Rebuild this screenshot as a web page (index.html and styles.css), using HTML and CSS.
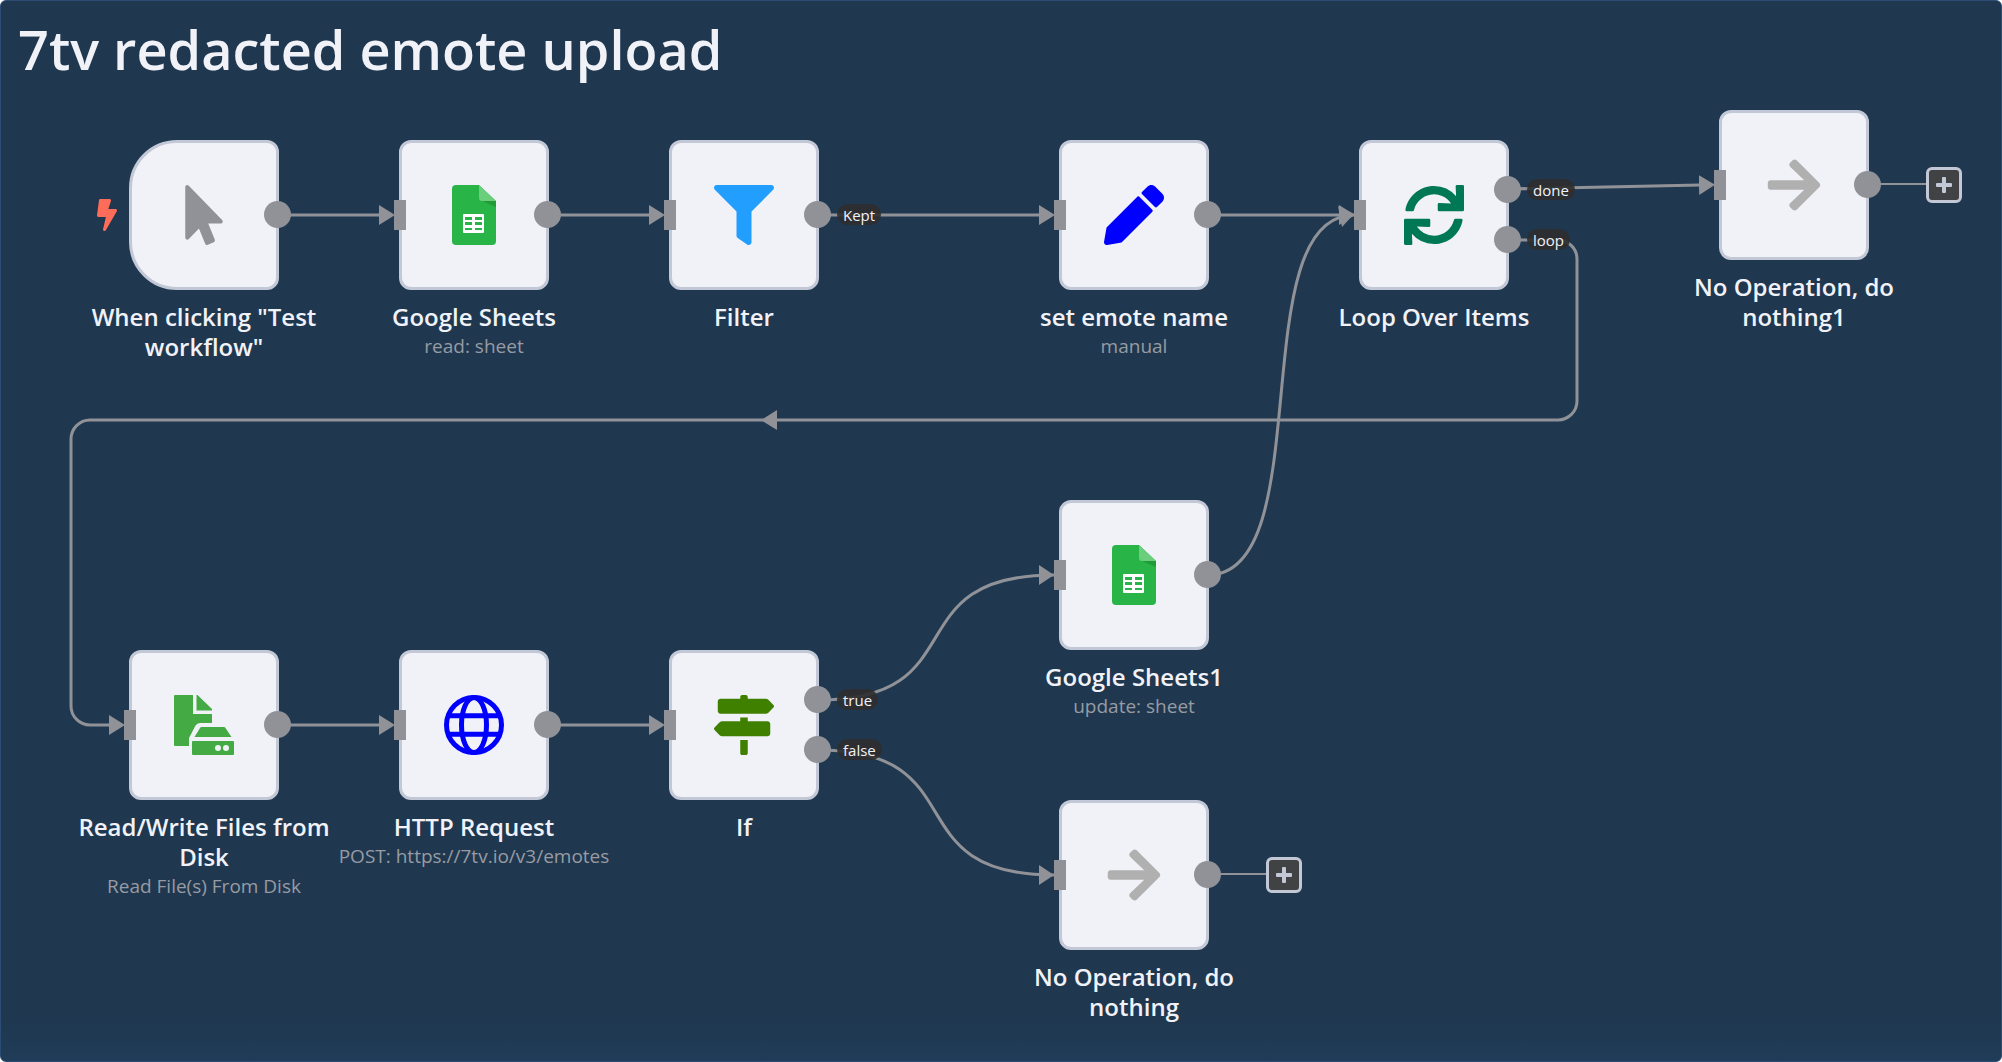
FILE: index.html
```html
<!DOCTYPE html>
<html lang="en">
<head>
<meta charset="utf-8">
<title>7tv redacted emote upload</title>
<link rel="stylesheet" href="styles.css">
</head>
<body>
<svg class="defs" aria-hidden="true">
  <symbol id="i-sheets" viewBox="0 0 44 60">
    <path fill="#28b446" d="M4 0h23l17 16v40a4 4 0 0 1-4 4H4a4 4 0 0 1-4-4V4a4 4 0 0 1 4-4z"/>
    <path fill="#219b38" d="M29 15.500L44 22V16z"/>
    <path fill="#6ace7c" d="M27 0l17 16H30a3 3 0 0 1-3-3z"/>
    <rect x="11" y="29" width="21" height="19" rx="1" fill="#fff"/>
    <path fill="#28b446" d="M13 32h7v3h-7zM23 32h7v3h-7zM13 37h7v3h-7zM23 37h7v3h-7zM13 43h7v2h-7zM23 43h7v2h-7z"/>
  </symbol>
  <symbol id="i-arrow" viewBox="0 0 448 512">
    <path d="M190.500 66.900l22.200-22.200c9.400-9.400 24.600-9.400 33.900 0L441 239c9.400 9.400 9.400 24.600 0 33.900L246.600 467.300c-9.400 9.400-24.600 9.400-33.900 0l-22.200-22.200c-9.500-9.500-9.300-25 .4-34.300L311.400 296H24c-13.300 0-24-10.700-24-24v-32c0-13.300 10.700-24 24-24h287.400L190.900 101.200c-9.800-9.300-10-24.800-.4-34.300z"/>
  </symbol>
  <symbol id="i-plus" viewBox="0 0 16 16">
    <path d="M7 0h2a1 1 0 0 1 1 1v5h5a1 1 0 0 1 1 1v2a1 1 0 0 1-1 1h-5v5a1 1 0 0 1-1 1H7a1 1 0 0 1-1-1v-5H1a1 1 0 0 1-1-1V7a1 1 0 0 1 1-1h5V1a1 1 0 0 1 1-1z"/>
  </symbol>
</svg>

<main class="canvas">
  <h1 class="title">7tv redacted emote upload</h1>

  <svg class="wires" aria-hidden="true">
    <defs>
      <marker id="tip" markerUnits="userSpaceOnUse" markerWidth="16" markerHeight="20" refX="1" refY="10" orient="auto">
        <path d="M0 0L16 10L0 20z"/>
      </marker>
    </defs>
    <g class="lines">
      <path marker-end="url(#tip)" d="M278 215H380"/>
      <path marker-end="url(#tip)" d="M548 215H650"/>
      <path marker-end="url(#tip)" d="M818 215H1040"/>
      <path marker-end="url(#tip)" d="M1208 215H1340"/>
      <path marker-end="url(#tip)" d="M1508 189L1700 185"/>
      <path marker-end="url(#tip)" d="M278 725H380"/>
      <path marker-end="url(#tip)" d="M548 725H650"/>
      <path d="M1208 575C1320 575 1242 215 1354 215"/>
      <path d="M818 700C978 700 893 575 1054 575"/>
      <path d="M818 750C978 750 893 875 1054 875"/>
      <path marker-end="url(#tip)" d="M1508 240H1558A19 19 0 0 1 1577 259V401A19 19 0 0 1 1558 420H90A19 19 0 0 0 71 439V706A19 19 0 0 0 90 725H110"/>
    </g>
    <g class="tips">
      <path d="M1338 206L1354 214L1342 227z"/>
      <path d="M1039 565L1054 575L1039 585z"/>
      <path d="M1039 865L1054 875L1039 885z"/>
      <path d="M777 410L761 420L777 430z"/>
    </g>
  </svg>

  <section class="node trigger" style="left:129px;top:140px">
    <svg class="bolt" viewBox="0 0 320 512" preserveAspectRatio="none"><path d="M296 160H180.600l42.600-129.800C227.200 15 215.700 0 200 0H56C44 0 33.800 8.900 32.200 20.800l-32 240C-1.700 275.200 9.500 288 24 288h118.700L96.600 482.500c-3.600 15.200 8 29.500 23.300 29.500 8.400 0 16.400-4.400 20.800-12l176-304c9.300-15.900-2.200-36-20.700-36z"/></svg>
    <div class="box"><svg class="icon gray" viewBox="0 0 320 512"><path d="M302.189 329.126H196.105l55.831 135.993c3.889 9.428-.555 19.999-9.444 23.999l-49.165 21.427c-9.165 4-19.443-.571-23.332-9.714l-53.053-129.136-86.664 89.138C18.729 472.710 0 463.554 0 447.977V18.299C0 1.899 19.921-6.096 30.277 5.443l284.412 292.542c11.472 11.179 3.007 31.141-12.500 31.141z"/></svg></div>
    <i class="out"></i>
    <h2>When clicking "Test workflow"</h2>
  </section>

  <section class="node" style="left:399px;top:140px">
    <div class="box"><svg class="icon"><use href="#i-sheets"/></svg></div>
    <i class="in"></i><i class="out"></i>
    <h2>Google Sheets</h2><p>read: sheet</p>
  </section>

  <section class="node" style="left:669px;top:140px">
    <div class="box"><svg class="icon azure" viewBox="0 0 512 512"><path d="M487.976 0H24.028C2.710 0-8.047 25.866 7.058 40.971L192 225.941V432c0 7.831 3.821 15.170 10.237 19.662l80 55.980C298.020 518.690 320 507.493 320 487.980V225.941l184.947-184.970C520.021 25.896 509.338 0 487.976 0z"/></svg></div>
    <i class="in"></i><i class="out"></i><span class="tag">Kept</span>
    <h2>Filter</h2>
  </section>

  <section class="node" style="left:1059px;top:140px">
    <div class="box"><svg class="icon blue" viewBox="0 0 512 512"><path d="M497.900 142.100l-46.100 46.100c-4.700 4.700-12.300 4.700-17 0l-111-111c-4.700-4.700-4.700-12.300 0-17l46.100-46.100c18.700-18.700 49.100-18.700 67.900 0l60.100 60.100c18.800 18.700 18.800 49.100 0 67.900zM284.200 99.800L21.600 362.400.4 483.900c-2.900 16.400 11.400 30.600 27.800 27.800l121.500-21.300 262.600-262.600c4.700-4.700 4.700-12.300 0-17l-111-111c-4.800-4.700-12.400-4.700-17.100 0z"/></svg></div>
    <i class="in"></i><i class="out"></i>
    <h2>set emote name</h2><p>manual</p>
  </section>

  <section class="node" style="left:1359px;top:140px">
    <div class="box"><svg class="icon teal" viewBox="0 0 512 512"><path d="M440.650 12.570l4 82.770A247.160 247.160 0 0 0 255.830 8C134.730 8 33.910 94.920 12.290 209.820A12 12 0 0 0 24.090 224h49.050a12 12 0 0 0 11.670-9.260 175.910 175.910 0 0 1 317-56.940l-101.460-4.860a12 12 0 0 0-12.570 12v47.410a12 12 0 0 0 12 12H500a12 12 0 0 0 12-12V12a12 12 0 0 0-12-12h-47.370a12 12 0 0 0-11.980 12.570zM255.830 432a175.610 175.610 0 0 1-146-77.800l101.800 4.870a12 12 0 0 0 12.570-12v-47.400a12 12 0 0 0-12-12H12a12 12 0 0 0-12 12V500a12 12 0 0 0 12 12h47.350a12 12 0 0 0 12-12.600l-4.150-82.570A247.170 247.170 0 0 0 255.830 504c121.110 0 221.930-86.920 243.550-201.820a12 12 0 0 0-11.800-14.180h-49.050a12 12 0 0 0-11.670 9.260A175.860 175.860 0 0 1 255.830 432z"/></svg></div>
    <i class="in"></i><i class="out upper"></i><i class="out lower"></i>
    <span class="tag upper">done</span><span class="tag lower">loop</span>
    <h2>Loop Over Items</h2>
  </section>

  <section class="node" style="left:1719px;top:110px">
    <div class="box"><svg class="icon silver"><use href="#i-arrow"/></svg></div>
    <i class="in"></i><i class="lead"></i><i class="out"></i>
    <button class="add" aria-label="Add node"><svg><use href="#i-plus"/></svg></button>
    <h2>No Operation, do nothing1</h2>
  </section>

  <section class="node" style="left:129px;top:650px">
    <div class="box"><svg class="icon green" viewBox="0 0 60 60"><path d="M1 0h18v19h19v9H26q-3 0-4.500 2.500L15 43v8H1q-1 0-1-1V1q0-1 1-1zM22.500 0h1L38 14v1.500H22.500zM26 33q.6-1 1.500-1H50q1 0 1.500 1l6 9H20.500zM19 46h40q1 0 1 1v12q0 1-1 1H19q-1 0-1-1V47q0-1 1-1zM44 50a3 3 0 1 0 0 6 3 3 0 0 0 0-6zM52 50a3 3 0 1 0 0 6 3 3 0 0 0 0-6z"/></svg></div>
    <i class="in"></i><i class="out"></i>
    <h2>Read/Write Files from Disk</h2><p>Read File(s) From Disk</p>
  </section>

  <section class="node" style="left:399px;top:650px">
    <div class="box"><svg class="icon globe" viewBox="0 0 60 60"><circle cx="30" cy="30" r="27.500"/><ellipse cx="30" cy="30" rx="12.500" ry="27.500"/><path d="M4.500 20.800h51M4.500 39.200h51"/></svg></div>
    <i class="in"></i><i class="out"></i>
    <h2>HTTP Request</h2><p>POST: https://7tv.io/v3/emotes</p>
  </section>

  <section class="node" style="left:669px;top:650px">
    <div class="box"><svg class="icon moss" viewBox="0 0 512 512"><path d="M507.310 84.690L464 41.370c-6-6-14.140-9.370-22.630-9.370H288V16c0-8.840-7.160-16-16-16h-32c-8.840 0-16 7.160-16 16v16H56c-13.250 0-24 10.750-24 24v80c0 13.250 10.750 24 24 24h385.370c8.490 0 16.620-3.370 22.630-9.370l43.310-43.310c6.250-6.260 6.250-16.380 0-22.630zM224 496c0 8.840 7.160 16 16 16h32c8.840 0 16-7.160 16-16V384h-64v112zm232-272H288v-32h-64v32H70.630c-8.490 0-16.620 3.370-22.630 9.370L4.690 276.690c-6.250 6.250-6.250 16.380 0 22.630L48 342.630c6 6 14.140 9.370 22.630 9.370H456c13.250 0 24-10.750 24-24v-80c0-13.250-10.750-24-24-24z"/></svg></div>
    <i class="in"></i><i class="out upper"></i><i class="out lower"></i>
    <span class="tag upper">true</span><span class="tag lower">false</span>
    <h2>If</h2>
  </section>

  <section class="node" style="left:1059px;top:500px">
    <div class="box"><svg class="icon"><use href="#i-sheets"/></svg></div>
    <i class="in"></i><i class="out"></i>
    <h2>Google Sheets1</h2><p>update: sheet</p>
  </section>

  <section class="node" style="left:1059px;top:800px">
    <div class="box"><svg class="icon silver"><use href="#i-arrow"/></svg></div>
    <i class="in"></i><i class="lead"></i><i class="out"></i>
    <button class="add" aria-label="Add node"><svg><use href="#i-plus"/></svg></button>
    <h2>No Operation, do nothing</h2>
  </section>
</main>
</body>
</html>
```
FILE: styles.css
```css
* { box-sizing: border-box; }

body {
  margin: 0;
  background: #fff;
  font-family: "Open Sans", "Noto Sans", sans-serif;
}

.defs { display: none; }

.canvas {
  position: relative;
  min-height: 100vh;
  padding: 10px 17px;
  overflow: hidden;
  border: 1px solid #2b4d75;
  border-radius: 6px;
  background: linear-gradient(to top, #203c58, #1f3850 40px);
}

.title {
  margin: 0;
  color: #f1f2f8;
  font-size: 54px;
  font-weight: 600;
  line-height: 76px;
}

/* The canvas border shifts its positioned children by one pixel. */
.wires,
.node { margin: -1px 0 0 -1px; }

.wires {
  position: absolute;
  top: 0;
  left: 0;
  width: 100%;
  height: 100%;
  overflow: visible;
}

.wires marker path,
.tips { fill: #909298; }

.lines {
  fill: none;
  stroke: #909298;
  stroke-width: 3;
}

.node {
  position: absolute;
  display: flex;
  flex-direction: column;
  align-items: center;
  width: 150px;
}

.box {
  display: flex;
  align-items: center;
  justify-content: center;
  width: 150px;
  height: 150px;
  margin-bottom: 12px;
  border: 3px solid #c3c8d6;
  border-radius: 12px;
  background: #f1f2f8;
}

.trigger .box { border-radius: 48px 12px 12px 48px; }

.node h2,
.node p {
  margin: 0;
  text-align: center;
}

.node h2 {
  width: 270px;
  color: #f1f2f8;
  font-size: 24px;
  font-weight: 600;
  line-height: 30px;
}

.node p {
  color: #989ba3;
  font-size: 19px;
  line-height: 28px;
  white-space: nowrap;
}

.icon {
  width: 60px;
  height: 60px;
}

.gray { fill: #909298; }
.azure { fill: #229eff; }
.blue { fill: #00f; }
.teal { fill: #007755; }
.silver { fill: #b0b0b0; }
.green { fill: #44aa44; }
.moss { fill: #408000; }

.globe {
  fill: none;
  stroke: #00f;
  stroke-width: 5;
}

.bolt {
  position: absolute;
  top: 59px;
  left: -32px;
  width: 20px;
  height: 32px;
  fill: #ff6d5a;
}

.in,
.out,
.tag,
.lead,
.add { position: absolute; }

.in {
  top: 60px;
  left: -5px;
  width: 12px;
  height: 30px;
  background: #909298;
}

.out {
  top: 61px;
  left: 135px;
  width: 27px;
  height: 27px;
  border-radius: 50%;
  background: #909298;
}

.out.upper { top: 36px; }
.out.lower { top: 86px; }

.tag {
  top: 64px;
  left: 168px;
  padding: 2px 6px 0;
  border-radius: 11px;
  background: rgba(45, 46, 46, 0.9);
  color: #f1f2f8;
  font-size: 15px;
  line-height: 19px;
}

.tag.upper { top: 39px; }
.tag.lower { top: 89px; }

.lead {
  top: 73px;
  left: 150px;
  width: 58px;
  height: 2px;
  background: #909298;
}

.add {
  top: 57px;
  left: 207px;
  display: flex;
  align-items: center;
  justify-content: center;
  width: 36px;
  height: 36px;
  padding: 0;
  border: 3px solid #c3c8d6;
  border-radius: 6px;
  background: #404244;
}

.add svg {
  width: 16px;
  height: 16px;
  fill: #c3c8d6;
}
```
